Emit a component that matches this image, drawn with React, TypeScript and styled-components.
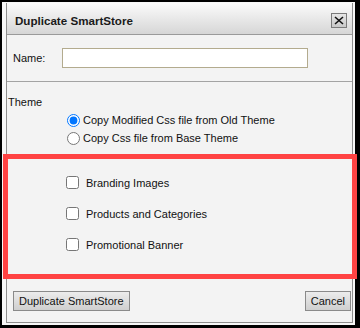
import React from 'react';
import styled, { createGlobalStyle } from 'styled-components';

const GlobalStyle = createGlobalStyle`
  html, body {
    margin: 0;
    padding: 0;
    background: #000;
  }
  body {
    font-family: Tahoma, "Liberation Sans", Arial, sans-serif;
    font-size: 11px;
    color: #111;
  }
`;

const Frame = styled.div`
  position: relative;
  width: 360px;
  height: 328px;
  box-sizing: border-box;
  padding: 2px 5px 3px 2px;
  background: #000;
`;
const Page = styled.div`
  height: 100%;
  box-sizing: border-box;
  padding: 1px 2px 2px 4px;
  background: #f7f7f7;
`;
const Dialog = styled.div`
  display: flex;
  flex-direction: column;
  width: 347px;
  height: 320px;
  box-sizing: border-box;
  border: 1px solid #8e8e8e;
  border-top: none;
  background: #f3f3f3;
`;
const Header = styled.div`
  display: flex;
  align-items: center;
  justify-content: space-between;
  height: 32px;
  box-sizing: border-box;
  padding: 3px 5px 0 8px;
  border-bottom: 1px solid #9a9a9a;
  background: linear-gradient(#fbfbfb, #d6d6d6);
`;
const Title = styled.span`
  font-weight: bold;
  font-size: 11.6px;
  color: #1a1a1a;
`;
const CloseButton = styled.button`
  display: flex;
  align-items: center;
  justify-content: center;
  width: 16px;
  height: 15px;
  padding: 0;
  border: 1px solid #7a7a7a;
  background: linear-gradient(#e6e6e6, #c9c9c9);
`;
const NameRow = styled.div`
  display: flex;
  align-items: center;
  height: 20px;
  margin: 13px 0 13px 6px;
`;
const NameLabel = styled.label`
  width: 49px;
`;
const TextInput = styled.input`
  width: 246px;
  height: 20px;
  box-sizing: border-box;
  border: 1px solid #b3ab8e;
  background: #fff;
  padding: 0 3px;
`;
const Separator = styled.div`
  height: 1px;
  background: #a3a3a3;
`;
const SectionLabel = styled.div`
  line-height: 14px;
  margin: 13px 0 0 1px;
`;
const RadioGroup = styled.div`
  display: flex;
  flex-direction: column;
  margin: 2px 0 0 59px;
`;
const OptionRow = styled.label<{ $height: number; $gap: number }>`
  display: flex;
  align-items: center;
  height: ${(p) => p.$height}px;
  gap: ${(p) => p.$gap}px;
`;
const Radio = styled.input`
  width: 13px;
  height: 13px;
  margin: 0 0 0 1px;
`;
const CheckGroup = styled.div`
  display: flex;
  flex-direction: column;
  margin: 20px 0 0 59px;
`;
const Check = styled.input`
  width: 13px;
  height: 13px;
  margin: 0;
`;
const Footer = styled.div`
  display: flex;
  justify-content: space-between;
  margin-top: auto;
  padding: 0 1px 11px 6px;
`;
const Button = styled.button`
  height: 20px;
  padding: 0 5px;
  font-family: inherit;
  font-size: 11px;
  color: #111;
  border: 1px solid #8a8a8a;
  background: linear-gradient(#ececec, #cfcfcf);
`;
const Highlight = styled.div`
  position: absolute;
  left: 3px;
  top: 154px;
  width: 354px;
  height: 125px;
  box-sizing: border-box;
  border: 5px solid #ff4343;
  pointer-events: none;
`;

export default function App() {
  return (
    <Frame>
      <GlobalStyle />
      <Page>
        <Dialog>
          <Header>
            <Title>Duplicate SmartStore</Title>
            <CloseButton aria-label="close">
              <svg width="10" height="9" viewBox="0 0 10 9">
                <path d="M1 1 L9 8 M9 1 L1 8" stroke="#111" strokeWidth="1.6" />
              </svg>
            </CloseButton>
          </Header>
          <NameRow>
            <NameLabel>Name:</NameLabel>
            <TextInput />
          </NameRow>
          <Separator />
          <SectionLabel>Theme</SectionLabel>
          <RadioGroup>
            <OptionRow $height={18} $gap={3}>
              <Radio type="radio" name="theme" defaultChecked />
              Copy Modified Css file from Old Theme
            </OptionRow>
            <OptionRow $height={18} $gap={3}>
              <Radio type="radio" name="theme" />
              Copy Css file from Base Theme
            </OptionRow>
          </RadioGroup>
          <CheckGroup>
            <OptionRow $height={31} $gap={7}>
              <Check type="checkbox" />
              Branding Images
            </OptionRow>
            <OptionRow $height={31} $gap={7}>
              <Check type="checkbox" />
              Products and Categories
            </OptionRow>
            <OptionRow $height={31} $gap={7}>
              <Check type="checkbox" />
              Promotional Banner
            </OptionRow>
          </CheckGroup>
          <Footer>
            <Button>Duplicate SmartStore</Button>
            <Button>Cancel</Button>
          </Footer>
        </Dialog>
      </Page>
      <Highlight />
    </Frame>
  );
}
